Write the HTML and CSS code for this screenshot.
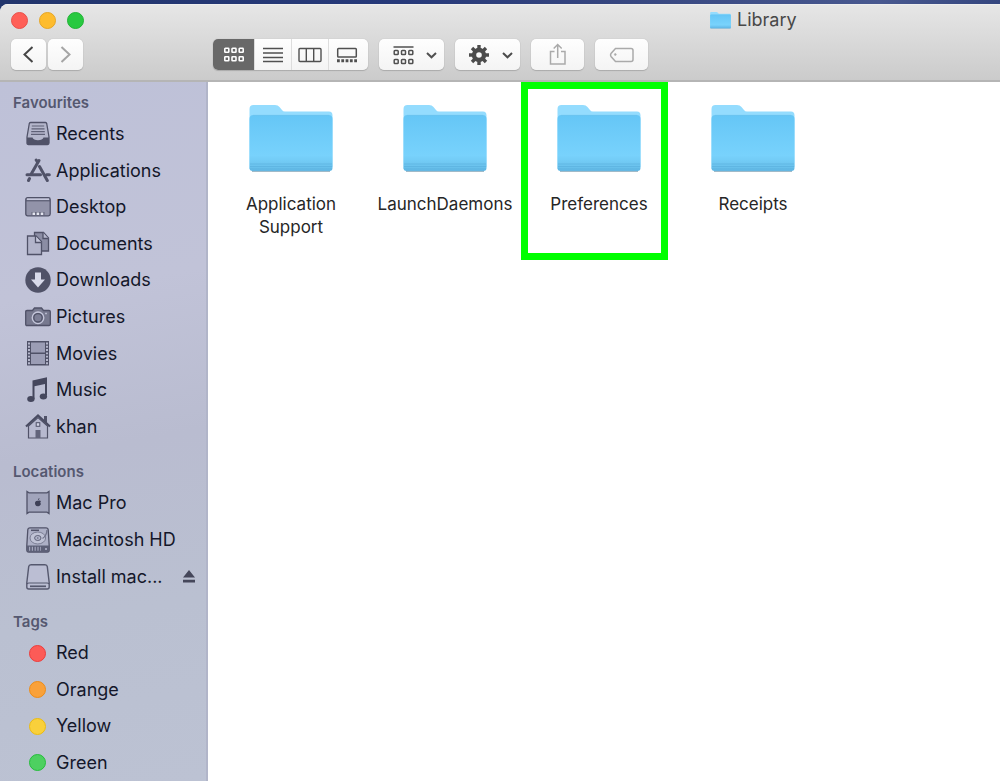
FILE: index.html
```html
<!DOCTYPE html>
<html lang="en">
<head>
<meta charset="utf-8">
<title>Library</title>
<link rel="stylesheet" href="styles.css">
</head>
<body>
<svg class="defs" aria-hidden="true">
  <defs>
    <linearGradient id="folder-front" x1="0" y1="0" x2="0" y2="1">
      <stop offset="0" stop-color="#65c6f6"/>
      <stop offset="0.72" stop-color="#78d2fc"/>
      <stop offset="0.86" stop-color="#70c8f2"/>
      <stop offset="1" stop-color="#62b9e6"/>
    </linearGradient>
    <symbol id="folder" viewBox="0 0 84 68">
      <path d="M.5 64V4q0-4 4-4h21.500q3 0 4.500 2l2.500 3q1 1.500 3 1.500h44q3.500 0 3.500 4V62z" fill="#94dcfe"/>
      <path d="M.5 14q0-4 4-4h75q4 0 4 4v49q0 3-3 3h-77q-3 0-3-3z" fill="url(#folder-front)"/>
      <path d="M4 10.300h76" stroke="#6ec2ec" stroke-width=".6"/>
      <path d="M1 59h82M1 61.500h82M1 64h82" stroke="#58aedb" stroke-width=".6"/>
      <path d="M3 66.400h78" stroke="#8aa9ba" stroke-width=".9"/>
    </symbol>
  </defs>
</svg>
<div class="window">
  <header class="header">
    <div class="titlebar">
      <div class="lights">
        <button class="light close" aria-label="Close"></button>
        <button class="light minimise" aria-label="Minimise"></button>
        <button class="light expand" aria-label="Zoom"></button>
      </div>
      <h1 class="title"><svg class="title-icon"><use href="#folder"/></svg>Library</h1>
    </div>
    <div class="toolbar">
      <div class="history">
        <button class="tool nav" aria-label="Back"><svg width="35" height="31" viewBox="0 0 35 31"><path d="M21.500 8L13.500 15.500l8 7.500" fill="none" stroke="#464646" stroke-width="2"/></svg></button>
        <button class="tool nav" aria-label="Forward"><svg width="35" height="31" viewBox="0 0 35 31"><path d="M13.500 8l8 7.500-8 7.500" fill="none" stroke="#a5a5a5" stroke-width="2"/></svg></button>
      </div>
      <div class="views tool">
        <button class="view active" aria-label="Icon view"><svg width="22" height="16" viewBox="0 0 22 16" fill="none" stroke="#fff" stroke-width="1.600"><rect x="1.800" y="1.300" width="4" height="4" rx=".6"/><rect x="9" y="1.300" width="4" height="4" rx=".6"/><rect x="16.200" y="1.300" width="4" height="4" rx=".6"/><rect x="1.800" y="9.800" width="4" height="4" rx=".6"/><rect x="9" y="9.800" width="4" height="4" rx=".6"/><rect x="16.200" y="9.800" width="4" height="4" rx=".6"/></svg></button>
        <button class="view" aria-label="List view"><svg width="20" height="16" viewBox="0 0 20 16"><path d="M0 1.500h20M0 6h20M0 10.500h20M0 14.500h20" stroke="#505050" stroke-width="1.400"/></svg></button>
        <button class="view" aria-label="Column view"><svg width="24" height="16" viewBox="0 0 24 16"><path d="M2 1.500h20q1 0 1 1v11q0 1-1 1H2q-1 0-1-1v-11q0-1 1-1zM8.300 1.500v13M15.700 1.500v13" fill="none" stroke="#505050" stroke-width="1.400"/></svg></button>
        <button class="view" aria-label="Gallery view"><svg width="22" height="16" viewBox="0 0 22 16"><rect x="1.700" y="1.500" width="18.600" height="8.500" rx=".8" fill="none" stroke="#505050" stroke-width="1.500"/><path d="M1 13.700h20" stroke="#505050" stroke-width="3" stroke-dasharray="2.800 1.500"/></svg></button>
      </div>
      <button class="tool menu" aria-label="Group items"><svg width="65" height="31" viewBox="0 0 65 31" fill="none" stroke="#505050" stroke-width="1.500"><path d="M14.500 8h20"/><rect x="15.200" y="11.500" width="4" height="4" rx=".8"/><rect x="22.500" y="11.500" width="4" height="4" rx=".8"/><rect x="29.800" y="11.500" width="4" height="4" rx=".8"/><rect x="15.200" y="20.500" width="4" height="4" rx=".8"/><rect x="22.500" y="20.500" width="4" height="4" rx=".8"/><rect x="29.800" y="20.500" width="4" height="4" rx=".8"/><path d="M48 14l4.500 4.300L57 14" stroke-width="2"/></svg></button>
      <button class="tool menu" aria-label="Actions"><svg width="65" height="31" viewBox="0 0 65 31" fill="none" stroke="#4c4c4c"><circle cx="24" cy="16" r="5" stroke-width="4.400"/><path d="M24 6v4M24 22v4M14 16h4M30 16h4M17 9l3 3M28 20l3 3M31 9l-3 3M20 20l-3 3" stroke-width="3.400"/><path d="M48 14l4.500 4.300L57 14" stroke-width="2"/></svg></button>
      <button class="tool wide" aria-label="Share"><svg width="53" height="31" viewBox="0 0 53 31" fill="none" stroke="#aaa" stroke-width="1.500"><path d="M23.500 12.500h-4v12.500h14.500v-12.500h-4M26.700 19V5.500M22.700 9.500l4-4 4 4"/></svg></button>
      <button class="tool wide" aria-label="Edit tags"><svg width="53" height="31" viewBox="0 0 53 31" fill="none" stroke="#aaa" stroke-width="1.500"><path d="M20.500 9.500H36q2 0 2 2v9q0 2-2 2H20.500l-4.500-5q-1-1.500 0-3z"/><circle cx="20.300" cy="15.500" r="1" fill="#aaa" stroke-width=".5"/></svg></button>
    </div>
  </header>
  <div class="body">
    <nav class="sidebar">
      <section class="section">
        <h2 class="heading">Favourites</h2>
        <ul class="list nine">
          <li><a class="place" href="#recents"><svg class="icon" viewBox="0 0 26 26"><path d="M5.500 1.500h15q1 0 1.200 1L24 16v6q0 1.500-1.500 1.500h-19Q2 23.500 2 22v-6L4.300 2.500q.2-1 1.200-1z" fill="#b4b6cb" stroke="#505268" stroke-width="1.300"/><path d="M6.800 5h12.400M6.500 7.800h13M6.200 10.600h13.600M6 13.400h14" stroke="#5f6177" stroke-width="1.200"/><path d="M2 16.500h5.500q1 2.800 5.500 2.800t5.500-2.800H24V22q0 1.500-1.500 1.500h-19Q2 23.500 2 22z" fill="#505268"/></svg>Recents</a></li>
          <li><a class="place" href="#applications"><svg class="icon" viewBox="0 0 26 26" fill="none" stroke="#505268" stroke-width="3" stroke-linecap="round"><path d="M14 2.500L6.500 15.500M4.500 20.500l-1 2M11.200 2l1.500 2.500M14.500 8.500l7.800 14"/><path d="M2 16.800h13.500M21.500 16.800h2.800"/></svg>Applications</a></li>
          <li><a class="place" href="#desktop"><svg class="icon" viewBox="0 0 26 26"><rect x=".8" y="3.600" width="24.400" height="18.200" rx="1.800" fill="#9293a9" stroke="#505268" stroke-width="1.300"/><path d="M2 5.300h22" stroke="#c6c8dc" stroke-width="1.500"/><path d="M1 6.800h24" stroke="#505268"/><path d="M6.500 21v-3h13v3z" fill="#62647a"/><path d="M7.500 19.800h11" stroke="#e4e5f0" stroke-width="2.600" stroke-dasharray="2.600 1.500"/></svg>Desktop</a></li>
          <li><a class="place" href="#documents"><svg class="icon" viewBox="0 0 26 26" stroke="#505268" stroke-width="1.300"><path d="M9.500 1.500h9L23.500 7v13h-14z" fill="#8b8da4"/><path d="M18 1.500v6h5.500" fill="#b7b9ce"/><path d="M2.500 5h8.500l5.500 5.500v13h-14z" fill="#b2b4ca"/><path d="M10.500 5v6.500h6" fill="#c4c6da"/></svg>Documents</a></li>
          <li><a class="place" href="#downloads"><svg class="icon" viewBox="0 0 26 26"><circle cx="13" cy="13" r="12.700" fill="#505268"/><path d="M10 5.500h6v7h4l-7 8-7-8h4z" fill="#d8daea"/></svg>Downloads</a></li>
          <li><a class="place" href="#pictures"><svg class="icon" viewBox="0 0 26 26" stroke="#505268" stroke-width="1.300"><path d="M2 6.500h5.500l2-2.500h7l2 2.500H24q1.300 0 1.300 1.300v12.400q0 1.300-1.300 1.300H2q-1.300 0-1.300-1.300V7.800Q.7 6.500 2 6.500z" fill="#77798f"/><circle cx="13" cy="13.800" r="5.800" fill="#8c8ea5" stroke="#c5c7db"/><circle cx="13" cy="13.800" r="4.200" fill="#7d7f96"/><path d="M20 9.500h2" stroke="#b5b7cb"/></svg>Pictures</a></li>
          <li><a class="place" href="#movies"><svg class="icon" viewBox="0 0 26 26"><rect x="2" y="0" width="22" height="24.500" fill="#4f5167"/><rect x="6" y="1.500" width="14" height="10" fill="#9b9db5"/><rect x="6" y="13" width="14" height="10" fill="#9b9db5"/><path d="M4 1.500v22M22 1.500v22" stroke="#c1c3d7" stroke-width="1.800" stroke-dasharray="1.900 1.400"/></svg>Movies</a></li>
          <li><a class="place" href="#music"><svg class="icon" viewBox="0 0 26 26" fill="#45475d"><path d="M7.500 3.500L22 .3v18h-2V7L9.500 9.300V22h-2z"/><ellipse cx="5.900" cy="22" rx="3.700" ry="3"/><ellipse cx="18.400" cy="19.500" rx="3.700" ry="3"/></svg>Music</a></li>
          <li><a class="place" href="#khan"><svg class="icon" viewBox="0 0 26 26"><path d="M3.500 12L13 3.500 22.500 12v12h-19z" fill="#b7b9cf" stroke="#505268" stroke-width="1.200"/><path d="M19 2h3v7l-3-3z" fill="#505268"/><path d="M1 12.500L13 1.500l12 11" fill="none" stroke="#4a4c62" stroke-width="2.200"/><path d="M10.500 24v-8h5v8z" fill="#62647b"/><rect x="11.200" y="8.700" width="3.600" height="3.600" fill="#d2d4e5" stroke="#505268"/></svg>khan</a></li>
        </ul>
      </section>
      <section class="section">
        <h2 class="heading">Locations</h2>
        <ul class="list three">
          <li><a class="place" href="#macpro"><svg class="icon" viewBox="0 0 26 26"><path d="M2 1.500l2 1.300h18l2-1.300v22l-2-1.300H4l-2 1.300z" fill="#a1a4bb" stroke="#505268" stroke-width="1.300"/><path d="M13 10.800q2.500-.9 2.900.7-1.400 1.300.1 2.600-1.200 2.700-3 1.900-1.900.8-2.900-1.700-.7-3.700 2.900-3.500zM12.900 10.200q0-1.800 1.600-2.100 0 1.800-1.600 2.100z" fill="#3e4056"/></svg>Mac Pro</a></li>
          <li><a class="place" href="#hd"><svg class="icon" viewBox="0 0 26 26"><path d="M5 .8h16q2 0 2.200 2l1 16V23q0 2-2 2H3.800q-2 0-2-2v-4.200l1-16q.2-2 2.200-2z" fill="#adb0c6" stroke="#505268" stroke-width="1.300"/><path d="M2 18.500h22V23q0 2-2 2H4q-2 0-2-2z" fill="#5d6077"/><path d="M4 21.800h12" stroke="#a3a6bc" stroke-width="4" stroke-dasharray="1.200 1.600"/><circle cx="21" cy="22" r="1" fill="#b7b9cf"/><path d="M6 3.300h8" stroke="#505268" stroke-width="1.500"/><ellipse cx="12.800" cy="11" rx="7.800" ry="6" fill="#bfc2d5" stroke="#7b7e94"/><ellipse cx="12.800" cy="11" rx="3.200" ry="2.500" fill="#b2b5ca" stroke="#5f6279"/><circle cx="12.800" cy="11" r=".8" fill="#5f6279"/><path d="M22 3q-.5 6-4.500 8.500" fill="none" stroke="#70738a" stroke-width="1.300"/></svg>Macintosh HD</a></li>
          <li class="ejectable"><a class="place" href="#install"><svg class="icon" viewBox="0 0 26 26"><path d="M6 .7h14q2 0 2.300 2l1.900 16V23q0 2-2 2H3.800q-2 0-2-2v-4.300l1.900-16Q4 .7 6 .7z" fill="#bbbed3" stroke="#55586e" stroke-width="1.400"/><path d="M2 20q.5-1 2-1h18q1.500 0 2 1" fill="none" stroke="#55586e" stroke-width="1.200"/><path d="M5 22.300h16" stroke="#55586e" stroke-width="1.700"/></svg>Install mac...</a><button class="eject" aria-label="Eject"><svg width="12" height="13" viewBox="0 0 12 13"><path d="M6 0l6 7.500H0zM0 9.800h12v2.700H0z" fill="#45475a"/></svg></button></li>
        </ul>
      </section>
      <section class="section">
        <h2 class="heading">Tags</h2>
        <ul class="list four">
          <li><a class="place" href="#red"><span class="dot red"></span>Red</a></li>
          <li><a class="place" href="#orange"><span class="dot orange"></span>Orange</a></li>
          <li><a class="place" href="#yellow"><span class="dot yellow"></span>Yellow</a></li>
          <li><a class="place" href="#green"><span class="dot green"></span>Green</a></li>
        </ul>
      </section>
    </nav>
    <main class="files">
      <a class="file" href="#application-support"><svg class="folder"><use href="#folder"/></svg><span>Application Support</span></a>
      <a class="file" href="#launchdaemons"><svg class="folder"><use href="#folder"/></svg><span>LaunchDaemons</span></a>
      <a class="file marked" href="#preferences"><svg class="folder"><use href="#folder"/></svg><span>Preferences</span></a>
      <a class="file" href="#receipts"><svg class="folder"><use href="#folder"/></svg><span>Receipts</span></a>
    </main>
  </div>
</div>
</body>
</html>
```
FILE: styles.css
```css
* {
  box-sizing: border-box;
}

body {
  margin: 0;
  padding-top: 4px;
  min-height: 100vh;
  display: flex;
  background: linear-gradient(90deg, #22356c, #26397a 40%, #35457f 60%, #48588f 88%, #34467f);
  font-family: Inter, "Liberation Sans", sans-serif;
}

button {
  margin: 0;
  padding: 0;
  border: 0;
  background: none;
  font: inherit;
}

a {
  color: inherit;
  text-decoration: none;
}

svg {
  display: block;
  flex: none;
}

.defs {
  position: absolute;
  width: 0;
  height: 0;
}

.window {
  flex: 1;
  display: flex;
  flex-direction: column;
  border-radius: 8px 0 0 0;
  overflow: hidden;
  background: #fff;
}

.header {
  height: 78px;
  background: linear-gradient(#e6e6e6, #cbcbcb);
  border-top: 1px solid #eee;
  border-bottom: 2px solid #b5b5b5;
}

.titlebar {
  display: grid;
  grid-template-columns: 71fr 29fr;
  align-items: center;
  height: 30px;
}

.lights {
  display: flex;
  gap: 11px;
  padding-left: 11px;
}

.light {
  width: 17px;
  height: 17px;
  border-radius: 50%;
}

.close {
  background: #ff5f57;
  border: 1px solid #e8504a;
}

.minimise {
  background: #febc2e;
  border: 1px solid #e5a526;
}

.expand {
  background: #28c940;
  border: 1px solid #20b335;
}

.title {
  display: flex;
  align-items: center;
  gap: 6px;
  margin: 0;
  font-size: 18px;
  font-weight: 400;
  line-height: 24px;
  color: #484848;
}

.title-icon {
  width: 21px;
  height: 17px;
}

.toolbar {
  display: flex;
  gap: 11px;
  padding: 4px 11px;
}

.history {
  display: flex;
  gap: 2px;
  width: 191px;
}

.tool {
  height: 31px;
  border-radius: 5px;
  background: linear-gradient(#fefefe, #f4f4f4);
  box-shadow: 0 0 1px #a8a8a8, 0 1px 1px #aaa;
}

.nav {
  width: 35px;
}

.menu {
  width: 65px;
}

.wide {
  width: 53px;
}

.views {
  display: flex;
  padding-right: 3px;
  overflow: hidden;
}

.view {
  display: flex;
  align-items: center;
  justify-content: center;
  width: 37px;
  border-left: 1px solid #ddd;
}

.view.active {
  width: 41px;
  border: 0;
  background: #686868;
}

.body {
  flex: 1;
  display: flex;
}

.sidebar {
  width: 208px;
  flex: none;
  display: flex;
  flex-direction: column;
  gap: 14px;
  padding-top: 8px;
  border-right: 2px solid #b1b5c9;
  background: linear-gradient(170deg, #bec1d8, #c1c3d8 30%, #b9bcd0 52%, #bac0d1 75%, #bcc2d3);
  color: #14172a;
}

.heading {
  margin: 0;
  padding-left: 13px;
  font-size: 15px;
  font-weight: 600;
  line-height: 26px;
  color: #555870;
}

.list {
  display: grid;
  grid-auto-rows: 1fr;
  margin: 0;
  padding: 0;
  list-style: none;
}

.nine {
  min-height: 329px;
}

.three {
  min-height: 110px;
}

.four {
  min-height: 146px;
}

.list li {
  display: flex;
  align-items: center;
  padding: 0 11px 0 25px;
}

.ejectable {
  justify-content: space-between;
}

.place {
  display: flex;
  align-items: center;
  gap: 5px;
  font-size: 18px;
  line-height: 24px;
}

.icon {
  width: 26px;
  height: 26px;
}

.dot {
  width: 17px;
  height: 17px;
  margin: 0 5px 0 4px;
  border: 1px solid;
  border-radius: 50%;
}

.red {
  background: #fc5b57;
  border-color: #ec3c3c;
}

.orange {
  background: #f9a13a;
  border-color: #ed8c17;
}

.yellow {
  background: #f9d03b;
  border-color: #ecbc10;
}

.green {
  background: #4dd060;
  border-color: #25bd3b;
}

.files {
  flex: 1;
  display: grid;
  grid-template-columns: repeat(auto-fill, 154px);
  align-content: start;
  padding-left: 6px;
}

.file {
  display: flex;
  flex-direction: column;
  align-items: center;
  gap: 20px;
  padding: 23px 10px 21px;
  font-size: 17px;
  line-height: 23px;
  text-align: center;
  color: #262626;
}

.folder {
  width: 84px;
  height: 68px;
}

.marked {
  position: relative;
}

.marked::after {
  content: "";
  position: absolute;
  inset: 0 8px 0 -1px;
  border: 7px solid #00ff00;
}
```
